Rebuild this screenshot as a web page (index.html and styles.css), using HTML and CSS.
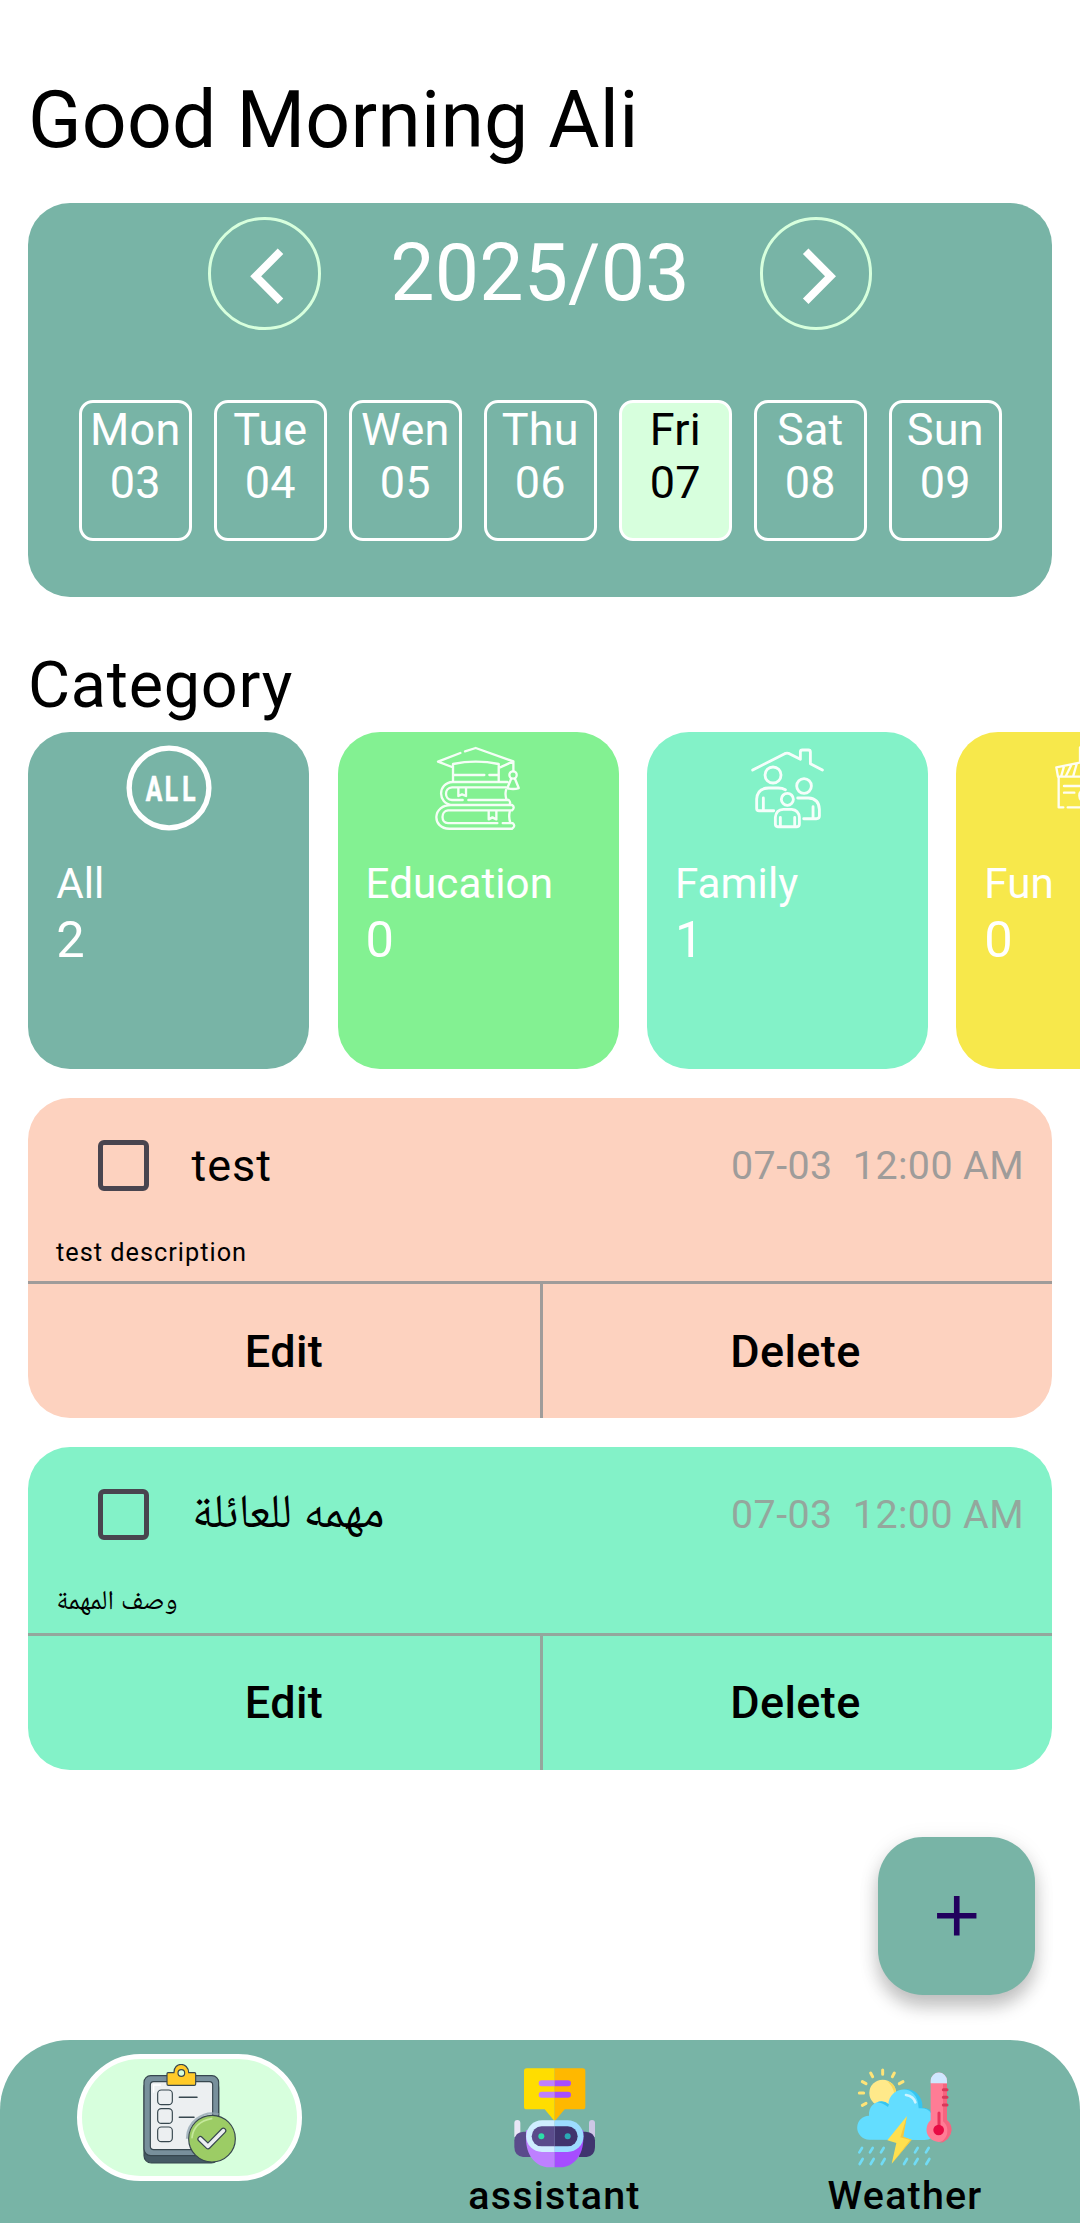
FILE: index.html
```html
<!DOCTYPE html>
<html lang="en">
<head>
<meta charset="utf-8">
<title>Tasks</title>
<link rel="stylesheet" href="styles.css">
</head>
<body>
<div class="app">
  <h1 class="greeting">Good Morning Ali</h1>

  <section class="calendar">
    <div class="month">
      <button class="round"><svg viewBox="0 0 113 113"><path d="M72.500 34.300 47.700 59.300 72.500 84.300"/></svg></button>
      <span class="month-name">2025/03</span>
      <button class="round"><svg viewBox="0 0 113 113"><path d="M45.700 34.300 70.500 59.300 45.700 84.300"/></svg></button>
    </div>
    <div class="week">
      <div class="day"><span>Mon</span><span>03</span></div>
      <div class="day"><span>Tue</span><span>04</span></div>
      <div class="day"><span>Wen</span><span>05</span></div>
      <div class="day"><span>Thu</span><span>06</span></div>
      <div class="day selected"><span>Fri</span><span>07</span></div>
      <div class="day"><span>Sat</span><span>08</span></div>
      <div class="day"><span>Sun</span><span>09</span></div>
    </div>
  </section>

  <h2 class="section-title">Category</h2>
  <section class="categories">
    <div class="category all">
      <svg viewBox="80 48 253 253">
        <circle cx="206" cy="174" r="119.500" fill="none" stroke="#fff" stroke-width="16"/>
        <text class="all-label" transform="scale(.7 1)" x="195 276 351" y="212">ALL</text>
      </svg>
      <span class="name">All</span><span class="count">2</span>
    </div>
    <div class="category education">
      <svg class="line" viewBox="78 48 253 253">
        <path d="M151 69 84 95 126 111M165 64 197 54 310 94 270 112M310 94V123M129 152V102Q197 88 266 102V152M129 135H223M238 135H266"/>
        <circle cx="309" cy="135" r="11"/>
        <path d="M303 147 292 174Q309 180 326 174L315 147M292 156H128C82 158 82 222 126 225H306Q316 232 306 241H114C92 243 92 279 114 279H262M288 172H126C102 174 102 208 126 210H158M175 210H296Q304 218 297 225M288 180Q284 195 290 210M126 225C66 222 64 296 118 296H306Q318 288 308 279H278M299 245Q295 262 301 279M145 174V198L156 193 168 198V174M236 243V268L247 262 259 268V243"/>
      </svg>
      <span class="name">Education</span><span class="count">0</span>
    </div>
    <div class="category family">
      <svg class="line bold" viewBox="46 48 253 253">
        <path d="M69 120 165 71Q172 68 179 71L212 88V66Q212 60 218 60H236Q242 60 242 66V101L278 120"/>
        <circle cx="130" cy="135" r="24"/><circle cx="223" cy="168" r="22"/><circle cx="173" cy="208" r="18"/>
        <path d="M132 242H88Q81 242 81 235V207Q83 174 117 174H146Q158 174 167 179M101 204V240M204 204H236Q268 206 269 238V258Q269 266 260 266H222M250 230V265M144 290Q137 290 137 282V262Q139 239 161 238H186Q207 240 209 262V282Q209 290 202 290ZM152 262V289M195 262V289"/>
      </svg>
      <span class="name">Family</span><span class="count">1</span>
    </div>
    <div class="category fun">
      <svg class="line" viewBox="973 48 253 253">
        <path d="M1047 98 977 112 982 140H1120M1000 109 992 137M1022 105 1006 137M1038 102 1028 137M984 142V232H998M1011 232H1090M1000 168H1060M1000 188H1031M1048 96V52H1120V100M1060 178Q1045 183 1046 198T1060 213"/>
      </svg>
      <span class="name">Fun</span><span class="count">0</span>
    </div>
  </section>

  <section class="tasks">
    <article class="task peach">
      <div class="task-head"><i class="checkbox"></i><span class="title">test</span><span class="date">07-03&nbsp; 12:00 AM</span></div>
      <p class="description">test description</p>
      <div class="actions"><button>Edit</button><button>Delete</button></div>
    </article>
    <article class="task mint">
      <div class="task-head"><i class="checkbox"></i><span class="title arabic" lang="ar">مهمه للعائلة</span><span class="date">07-03&nbsp; 12:00 AM</span></div>
      <p class="description arabic" lang="ar">وصف المهمة</p>
      <div class="actions"><button>Edit</button><button>Delete</button></div>
    </article>
  </section>

  <button class="fab"><svg viewBox="0 0 56 56"><path d="M28 21v14M21 28h14"/></svg></button>

  <nav class="nav">
    <div class="tab active">
      <div class="pill">
        <svg width="94" height="100" viewBox="248 101 282 300">
          <g stroke="#37474f" stroke-width="3.500" stroke-linejoin="round" stroke-linecap="round">
            <rect x="251" y="150" width="224" height="248" rx="22" fill="#455a64"/>
            <rect x="251" y="136" width="224" height="240" rx="20" fill="#78909c"/>
            <rect x="270" y="154" width="187" height="204" rx="10" fill="#eceff1"/>
            <path d="M323 127H341C340 94 384 94 385 127H403Q406 127 406 130V161Q406 165 402 165H324Q320 165 320 161V130Q320 127 323 127Z" fill="#ffca28"/>
            <circle cx="363" cy="128" r="10" fill="#d7ffdd"/>
            <g fill="none"><rect x="292" y="179" width="44" height="44" rx="11"/><rect x="292" y="235" width="44" height="44" rx="11"/><rect x="292" y="290" width="44" height="44" rx="11"/></g>
            <path d="M357 201H410M357 261H401" fill="none" stroke-width="4.500"/>
          </g>
          <path d="M280 187V164H302" fill="none" stroke="#fff" stroke-width="4"/>
          <path d="M380 325A76 76 0 0 1 475 252" fill="none" stroke="#8fa3ad" stroke-width="7" opacity=".75"/>
          <circle cx="455" cy="325" r="70" fill="#9ccc65" stroke="#37474f" stroke-width="3.500"/>
          <path d="M395 322Q400 275 454 265" fill="none" stroke="#c5e99b" stroke-width="5" stroke-linecap="round"/>
          <path d="M420 326 443 348 489 301" fill="none" stroke="#37474f" stroke-width="18" stroke-linecap="round" stroke-linejoin="round"/>
          <path d="M420 326 443 348 489 301" fill="none" stroke="#eceff1" stroke-width="11" stroke-linecap="round" stroke-linejoin="round"/>
        </svg>
      </div>
    </div>
    <div class="tab">
      <svg width="82" height="100" viewBox="190 83 246 300">
        <path d="M228 84H312V243L282 207H228Q220 207 220 199V92Q220 84 228 84Z" fill="#fd0"/>
        <path d="M312 84H396Q404 84 404 92V199Q404 207 396 207H342L312 243Z" fill="#ffb800"/>
        <path d="M312 120H273a9 9 0 0 0 0 18h39M312 154H273a9 9 0 0 0 0 18h39" fill="#be80ff"/>
        <path d="M312 120h40a9 9 0 0 1 0 18h-40M312 154h40a9 9 0 0 1 0 18h-40" fill="#a64dff"/>
        <path d="M191 290V248a9 9 0 0 1 18 0V290Z" fill="#e9e6f6"/><path d="M415 290V248a9 9 0 0 1 18 0V290Z" fill="#cdc7e6"/>
        <path d="M240 350H217Q191 346 191 320V300Q193 275 219 274H240Z" fill="#5a4b8b"/>
        <path d="M385 350H408Q433 346 433 320V300Q431 275 405 274H385Z" fill="#40346e"/>
        <path d="M226 295C226 345 255 380 296 381H312V270H226Z" fill="#be80ff"/>
        <path d="M398 295C398 345 369 380 328 381H312V270H398Z" fill="#a64dff"/>
        <path d="M312 240H274A47.500 47.500 0 0 0 274 335H312Z" fill="#cfedff"/><path d="M312 240H351A47.500 47.500 0 0 1 351 335H312Z" fill="#9cdcff"/>
        <path d="M312 258H273A30 30 0 0 0 273 318H312Z" fill="#5a4b8b"/><path d="M312 258H351A30 30 0 0 1 351 318H312Z" fill="#40346e"/>
        <circle cx="272" cy="288" r="9" fill="#2be0a8"/><circle cx="351" cy="288" r="9" fill="#2aaab5"/>
      </svg>
      <span>assistant</span>
    </div>
    <div class="tab">
      <svg width="96" height="100" viewBox="172 745 288 300">
        <g stroke="#ffe477" stroke-width="9" stroke-linecap="round"><path d="M249 751v13M213 760l6 11M284 760l-6 11M188 786l11 6M310 786l-11 6M179 820h13M188 857l11-6"/></g>
        <circle cx="249" cy="820" r="40" fill="#ffe98a"/>
        <path d="M262 784Q280 800 284 822L289 816Q286 790 262 784Z" fill="#f8d95c"/>
        <path d="M300 880V814C340 795 372 832 368 864Q394 864 398 885V950Z" fill="#35c5f0"/>
        <path d="M209 960A36 36 0 0 1 208 888C205 850 245 834 266 855C268 800 355 785 357 866Q385 864 395 882V955Q388 961 374 961Z" fill="#63ddff"/>
        <path d="M232 848Q252 840 268 854L265 862Q250 850 232 848Z" fill="#35c5f0"/>
        <path d="M319 826Q342 830 347 848" fill="none" stroke="#cdf3ff" stroke-width="8" stroke-linecap="round"/>
        <path d="M322 889 263 962 290 970 276 1032 336 960 307 951Z" fill="#ffe04f"/><path d="M322 889 302 953 331 961 276 1032 336 960 311 951Z" fill="#f4c93e"/>
        <path d="M187 985l-8 13M219 985l-8 13M252 985l-8 13M354 985l-8 13M387 985l-8 13M189 1018l-9 15M222 1018l-9 15M255 1018l-9 15M322 1018l-9 15M354 1018l-9 15M389 1018l-9 15" stroke="#71dcf6" stroke-width="8" stroke-linecap="round"/>
        <path d="M393 790V783A24.500 24.500 0 0 1 442 783V902A37 37 0 1 1 393 902Z" fill="#ff7c95"/>
        <path d="M430 792H442V902Q456 912 456 932Q450 965 420 970Q445 955 443 930Q442 915 430 905Z" fill="#f5647f"/>
        <path d="M393 791V783A24.500 24.500 0 0 1 442 783V791Z" fill="#cfe7ff"/>
        <path d="M442 810H431M442 833H431M442 856H431" stroke="#d9385a" stroke-width="9" stroke-linecap="round"/>
        <path d="M418 880V925" stroke="#e8325b" stroke-width="9" stroke-linecap="round"/><circle cx="417" cy="931" r="16" fill="#e80a44"/>
      </svg>
      <span>Weather</span>
    </div>
  </nav>
</div>
</body>
</html>
```
FILE: styles.css
```css
* { box-sizing: border-box; }
body { margin: 0; background: #fff; }
button { border: 0; padding: 0; margin: 0; background: none; color: inherit; font: inherit; letter-spacing: inherit; }
.app {
  width: 1080px; height: 2223px; overflow: hidden; position: relative;
  display: flex; flex-direction: column;
  font-family: Roboto, "Noto Sans", sans-serif; letter-spacing: .4px; color: #000;
}
.greeting { margin: 0; padding: 74px 28px 0; height: 203.400px; font-size: 78.750px; font-weight: 400; line-height: 92px; letter-spacing: .2px; }
.calendar {
  margin: 0 28px; height: 393.750px; flex: none; border-radius: 42px; background: #78b4a6; color: #fff;
  padding-top: 14px;
}
.month { display: flex; justify-content: center; align-items: center; height: 112.500px; }
.month-name { width: 439px; text-align: center; font-size: 78.750px; line-height: 92px; margin-top: -1px; letter-spacing: .2px; }
.round { width: 112.500px; height: 112.500px; border-radius: 50%; border: 3px solid #d7ffdd; flex: none; }
.round svg { display: block; width: 113px; height: 113px; margin: -3px; fill: none; stroke: #fff; stroke-width: 7.800; }
.week { display: flex; gap: 22.500px; padding: 70.300px 0 0 51px; }
.day {
  width: 112.500px; height: 140.600px; border: 3px solid #fff; border-radius: 14px; flex: none;
  display: flex; flex-direction: column; align-items: center; font-size: 45px; line-height: 53px; letter-spacing: .2px;
}
.day.selected { background: #d7ffdd; color: #000; }
.section-title { margin: 0; padding: 48.500px 28px 0; height: 134.850px; flex: none; font-size: 64.700px; font-weight: 400; line-height: 78px; letter-spacing: .75px; }
.categories { display: flex; gap: 28.125px; padding-left: 28.125px; flex: none; height: 337.500px; }
.category {
  width: 281.250px; flex: none; border-radius: 42px; color: #fff; padding: 14px 28px 0;
  display: flex; flex-direction: column;
}
.category svg { width: 84.400px; height: 84.400px; align-self: center; flex: none; margin-bottom: 28.500px; overflow: visible; }
.all { background: #78b4a6; }
.education { background: #83f192; }
.family { background: #83f2c8; }
.fun { background: #f7e84b; overflow: hidden; }
.line { fill: none; stroke: #fff; stroke-width: 7; stroke-linecap: round; stroke-linejoin: round; stroke-opacity: .92; }
.line.bold { stroke-width: 8.500; }
.all-label { font: 700 105px Roboto, sans-serif; letter-spacing: 0; fill: #fff; stroke: #fff; stroke-width: 2; }
.name { font-size: 42.200px; line-height: 50px; letter-spacing: .05px; }
.count { font-size: 50.600px; line-height: 62px; }
.tasks { display: flex; flex-direction: column; gap: 28.300px; padding: 28.500px 28px 0; }
.task { border-radius: 42px; overflow: hidden; display: flex; flex-direction: column; }
.peach { background: #fdd2bf; }
.mint { background: #83f2c8; }
.task-head { display: flex; align-items: center; height: 135px; padding: 0 28px 0 70px; }
.checkbox { width: 51px; height: 51px; border: 5.600px solid #49454f; border-radius: 6px; margin-right: 42.500px; }
.title { font-size: 45px; line-height: 53px; letter-spacing: 1px; }
.date { margin-left: auto; font-size: 39.400px; color: #9f9c9a; padding-top: 1px; }
.description { margin: 0; padding: 5px 28px 0; height: 48px; font-size: 25.300px; line-height: 30px; letter-spacing: 1px; }
.mint .description { height: 51px; padding-top: 6px; font-size: 27.300px; }
.arabic { font-family: "Noto Naskh Arabic UI", "Noto Naskh Arabic", "DejaVu Sans", sans-serif; word-spacing: 1px; }
.title.arabic { font-size: 47.600px; }
.actions { display: grid; grid-template-columns: 1fr 1fr; height: 137.500px; border-top: 3px solid #9f9c9a; }
.actions button { font-size: 45px; font-weight: 500; letter-spacing: .4px; }
.actions button:last-child { border-left: 3px solid #9f9c9a; padding-right: 4px; }
.mint .actions, .mint .actions button { border-color: #94a79d; }
.mint .actions button { padding-bottom: 2px; }
.mint .date { color: #94a79d; }
.fab {
  margin: 67px 45px 0 auto; width: 157.500px; height: 157.500px; flex: none; border-radius: 45px; background: #78b4a6;
  box-shadow: 0 12px 18px rgba(0,0,0,.22), 0 3px 22px rgba(0,0,0,.08);
}
.fab svg { display: block; width: 100%; fill: none; stroke: #21005d; stroke-width: 2; }
.nav {
  margin-top: auto; height: 183px; flex: none; border-radius: 70px 70px 0 0; background: #78b4a6;
  display: grid; grid-template-columns: 379px 351px 350px; padding-top: 14px;
}
.tab { display: flex; flex-direction: column; align-items: center; padding-top: 14px; font-size: 39.400px; font-weight: 500; line-height: 46px; letter-spacing: 1.200px; }
.tab.active { padding-top: 0; }
.tab svg { display: block; flex: none; }
.tab span { margin-top: 5px; }
.pill { width: 225px; height: 127px; border: 5px solid #fff; border-radius: 64px; background: #d7ffdd; padding: 5px 0 0 61px; }
```
